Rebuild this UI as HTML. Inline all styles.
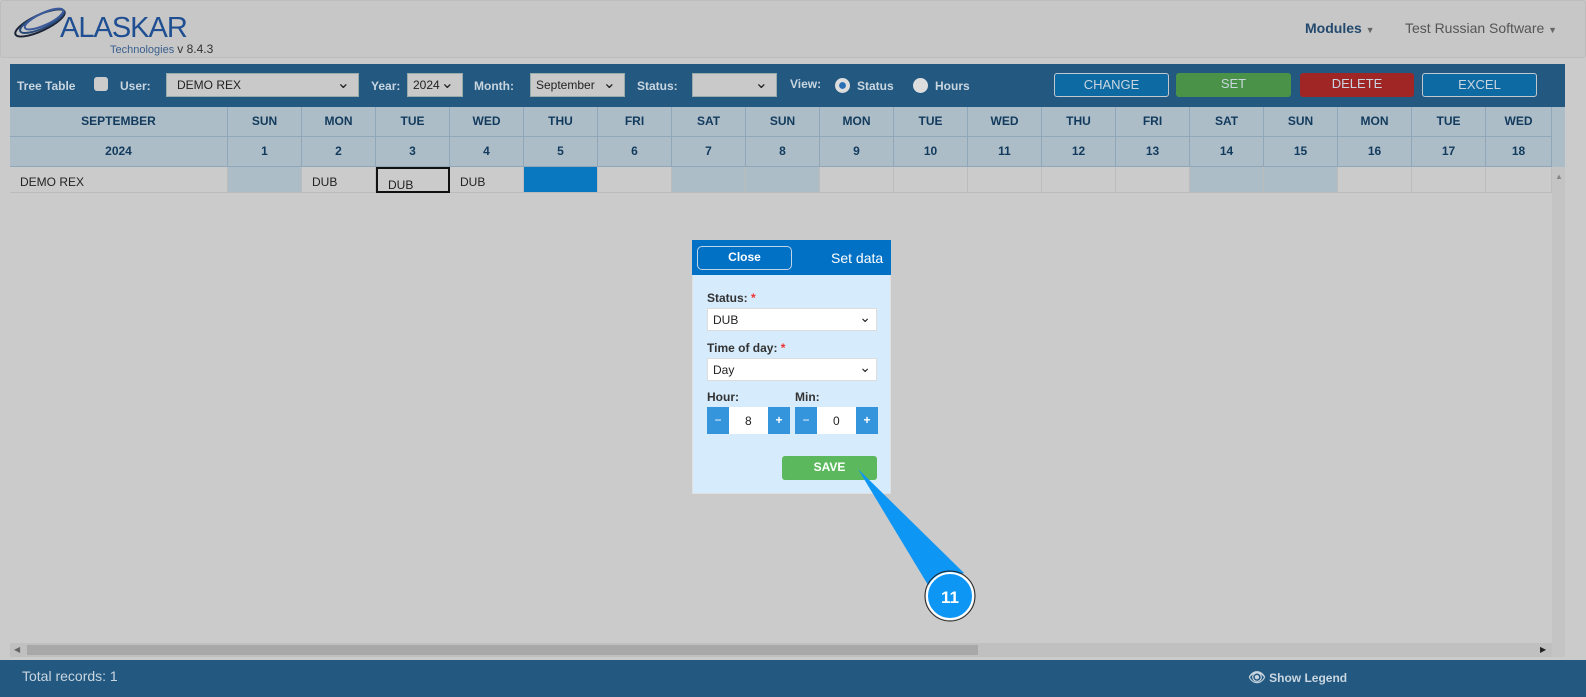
<!DOCTYPE html>
<html><head><style>
*{box-sizing:border-box;margin:0;padding:0}
body{width:1586px;height:697px;background:#cbcbcb;font-family:"Liberation Sans",sans-serif;position:relative;overflow:hidden;font-size:12px}
.abs{position:absolute}
.hdr{left:0;top:0;width:1586px;height:58px;background:#c7c7c7;border:1px solid #bdbdbd;border-radius:3px}
.tb{left:10px;top:64px;width:1555px;height:43px;background:#235880;color:#c9d6e0;font-weight:bold}
.sel{position:absolute;background:#c9c9c9;border:1px solid #9aa;height:24px;top:9px;color:#222;font-weight:normal;padding:4px 10px;font-size:12px}
.sel:after{content:"⌄";position:absolute;right:8px;top:-1px;font-size:16px}
.btn{position:absolute;top:9px;height:24px;border-radius:3px;color:#c9d6e0;font-weight:normal;text-align:center;line-height:22px;font-size:13px}
.th{position:absolute;background:#acbdc8;border-right:1px solid #8fa7b8;border-bottom:1px solid #8fa7b8;color:#123a5c;font-weight:bold;text-align:center;font-size:12px}
.td{position:absolute;top:167px;height:26px;border-right:1px solid #bcbcbc;border-bottom:1px solid #bcbcbc;font-size:12px;color:#222;padding:8px 10px 0}
</style></head><body>
<div class="abs hdr"></div>
<svg class="abs" style="left:10px;top:6px" width="60" height="34" viewBox="0 0 60 34">
<g fill="none" stroke="#1a2233" stroke-width="2">
<ellipse cx="30" cy="17" rx="27" ry="8" transform="rotate(-25 30 17)"/>
<ellipse cx="32" cy="15" rx="24" ry="7" transform="rotate(-25 32 15)" stroke="#2a4a7a"/>
<ellipse cx="34" cy="13" rx="21" ry="6" transform="rotate(-25 34 13)" stroke="#3a5a9a"/>
</g></svg>
<div class="abs" style="left:60px;top:12px;font-size:29px;color:#1f4f92;letter-spacing:-1px">ALASKAR</div>
<div class="abs" style="left:110px;top:42px;font-size:11px;color:#3a5f8e">Technologies <span style="color:#333;font-size:12px">v 8.4.3</span></div>
<div class="abs" style="left:1305px;top:20px;font-size:14px;font-weight:bold;color:#23496e">Modules <span style="font-size:9px;color:#666">▼</span></div>
<div class="abs" style="left:1405px;top:20px;font-size:14px;color:#555">Test Russian Software <span style="font-size:9px;color:#666">▼</span></div>

<div class="abs tb">
<div class="abs" style="left:7px;top:15px">Tree Table</div>
<div class="abs" style="left:84px;top:13px;width:14px;height:14px;background:#ccc;border-radius:3px"></div>
<div class="abs" style="left:110px;top:15px">User:</div>
<div class="sel" style="left:156px;width:193px">DEMO REX</div>
<div class="abs" style="left:361px;top:15px">Year:</div>
<div class="sel" style="left:397px;width:56px;padding-left:5px">2024</div>
<div class="abs" style="left:464px;top:15px">Month:</div>
<div class="sel" style="left:520px;width:95px;padding-left:5px">September</div>
<div class="abs" style="left:627px;top:15px">Status:</div>
<div class="sel" style="left:682px;width:85px"></div>
<div class="abs" style="left:780px;top:13px">View:</div>
<div class="abs" style="left:825px;top:14px;width:15px;height:15px;border-radius:50%;background:#ddd;border:4px solid #ddd;box-shadow:inset 0 0 0 4px #2a6fb5"></div>
<div class="abs" style="left:847px;top:15px">Status</div>
<div class="abs" style="left:903px;top:14px;width:15px;height:15px;border-radius:50%;background:#ddd"></div>
<div class="abs" style="left:925px;top:15px">Hours</div>
<div class="btn" style="left:1044px;width:115px;background:#0e6aa3;border:1px solid #c0c8d0">CHANGE</div>
<div class="btn" style="left:1166px;width:115px;background:#4a9248">SET</div>
<div class="btn" style="left:1290px;width:114px;background:#a02626">DELETE</div>
<div class="btn" style="left:1412px;width:115px;background:#0e6aa3;border:1px solid #c0c8d0">EXCEL</div>
</div>

<div class="th" style="left:10px;top:107px;width:218px;height:30px;line-height:29px">SEPTEMBER</div>
<div class="th" style="left:10px;top:137px;width:218px;height:30px;line-height:29px">2024</div>
<div class="abs" style="left:1552px;top:107px;width:13px;height:60px;background:#acbdc8"></div>
<div class="td" style="left:10px;width:218px;padding-left:10px">DEMO REX</div>
<div id="cols"></div>
<script>
var d=["SUN","MON","TUE","WED","THU","FRI","SAT"],h="";
for(var i=0;i<18;i++){var x=228+i*74,w=i==17?66:74;
h+='<div class="th" style="left:'+x+'px;top:107px;width:'+w+'px;height:30px;line-height:29px">'+d[i%7]+'</div>';
h+='<div class="th" style="left:'+x+'px;top:137px;width:'+w+'px;height:30px;line-height:29px">'+(i+1)+'</div>';
var bg=(i%7==0||i%7==6)?'#acbdc8':'transparent',t='';
if(i==4)bg='#0a78c0';if(i>=1&&i<=3)t='DUB';
var ex=i==2?'border:2px solid #111;padding-top:9px;':'';
h+='<div class="td" style="left:'+x+'px;width:'+w+'px;background:'+bg+';'+ex+'">'+t+'</div>';}
document.getElementById('cols').innerHTML=h;
</script>
<div class="abs" style="left:1552px;top:167px;width:13px;height:490px;background:#c4c4c4"></div>
<div class="abs" style="left:1555px;top:172px;font-size:8px;color:#888">▲</div>
<div class="abs" style="left:10px;top:643px;width:1542px;height:14px;background:#c0c0c0"></div>
<div class="abs" style="left:27px;top:645px;width:951px;height:10px;background:#a8a8a8"></div>
<div class="abs" style="left:14px;top:645px;font-size:8px;color:#666">◀</div>
<div class="abs" style="left:1540px;top:645px;font-size:8px;color:#222">▶</div>
<div class="abs" style="left:0;top:660px;width:1586px;height:37px;background:#235880"></div>
<div class="abs" style="left:22px;top:668px;font-size:14px;color:#c9d6e0">Total records: 1</div>
<div class="abs" style="left:1248px;top:669px;font-size:12px;color:#c9d6e0;font-weight:bold"><span style="font-size:14px">👁</span> Show Legend</div>

<div class="abs" style="left:692px;top:240px;width:199px;height:254px;background:#d6ebfb;border:1px solid #e0e0e0"></div>
<div class="abs" style="left:692px;top:240px;width:199px;height:35px;background:#0071c4"></div>
<div class="abs" style="left:697px;top:246px;width:95px;height:24px;border:1px solid #c0d4e8;border-radius:5px;color:#fff;text-align:center;line-height:20px;font-size:12px;font-weight:bold">Close</div>
<div class="abs" style="left:831px;top:250px;color:#fff;font-size:14px">Set data</div>
<div class="abs" style="left:707px;top:291px;font-weight:bold;color:#333">Status: <span style="color:#e33">*</span></div>
<div class="abs" style="left:707px;top:308px;width:170px;height:23px;background:#fff;border:1px solid #ddd;padding:4px 5px;color:#222">DUB<span style="position:absolute;right:5px;top:0;font-size:14px">⌄</span></div>
<div class="abs" style="left:707px;top:341px;font-weight:bold;color:#333">Time of day: <span style="color:#e33">*</span></div>
<div class="abs" style="left:707px;top:358px;width:170px;height:23px;background:#fff;border:1px solid #ddd;padding:4px 5px;color:#222">Day<span style="position:absolute;right:5px;top:0;font-size:14px">⌄</span></div>
<div class="abs" style="left:707px;top:390px;font-weight:bold;color:#333">Hour:</div>
<div class="abs" style="left:795px;top:390px;font-weight:bold;color:#333">Min:</div>
<div class="abs" style="left:707px;top:407px;width:83px;height:27px;background:#fff"></div>
<div class="abs" style="left:707px;top:407px;width:22px;height:27px;background:#3595dc;color:#fff;text-align:center;line-height:26px">−</div>
<div class="abs" style="left:768px;top:407px;width:22px;height:27px;background:#3595dc;color:#fff;text-align:center;line-height:26px;font-weight:bold">+</div>
<div class="abs" style="left:745px;top:414px;color:#222">8</div>
<div class="abs" style="left:795px;top:407px;width:83px;height:27px;background:#fff"></div>
<div class="abs" style="left:795px;top:407px;width:22px;height:27px;background:#3595dc;color:#fff;text-align:center;line-height:26px">−</div>
<div class="abs" style="left:856px;top:407px;width:22px;height:27px;background:#3595dc;color:#fff;text-align:center;line-height:26px;font-weight:bold">+</div>
<div class="abs" style="left:833px;top:414px;color:#222">0</div>
<div class="abs" style="left:782px;top:456px;width:95px;height:24px;background:#5cb85c;border-radius:3px;color:#fff;text-align:center;line-height:22px;font-weight:bold">SAVE</div>
<svg class="abs" style="left:850px;top:465px" width="130" height="160">
<polygon points="8,4 78,120 114,108" fill="#0e96f5"/>
<circle cx="100" cy="131" r="23" fill="#0e96f5" stroke="#fff" stroke-width="2"/>
<circle cx="100" cy="131" r="25" fill="none" stroke="#222" stroke-width="1"/>
<text x="100" y="138" fill="#fff" font-family="Liberation Sans" font-weight="bold" font-size="17" text-anchor="middle">11</text>
</svg>
</body></html>
